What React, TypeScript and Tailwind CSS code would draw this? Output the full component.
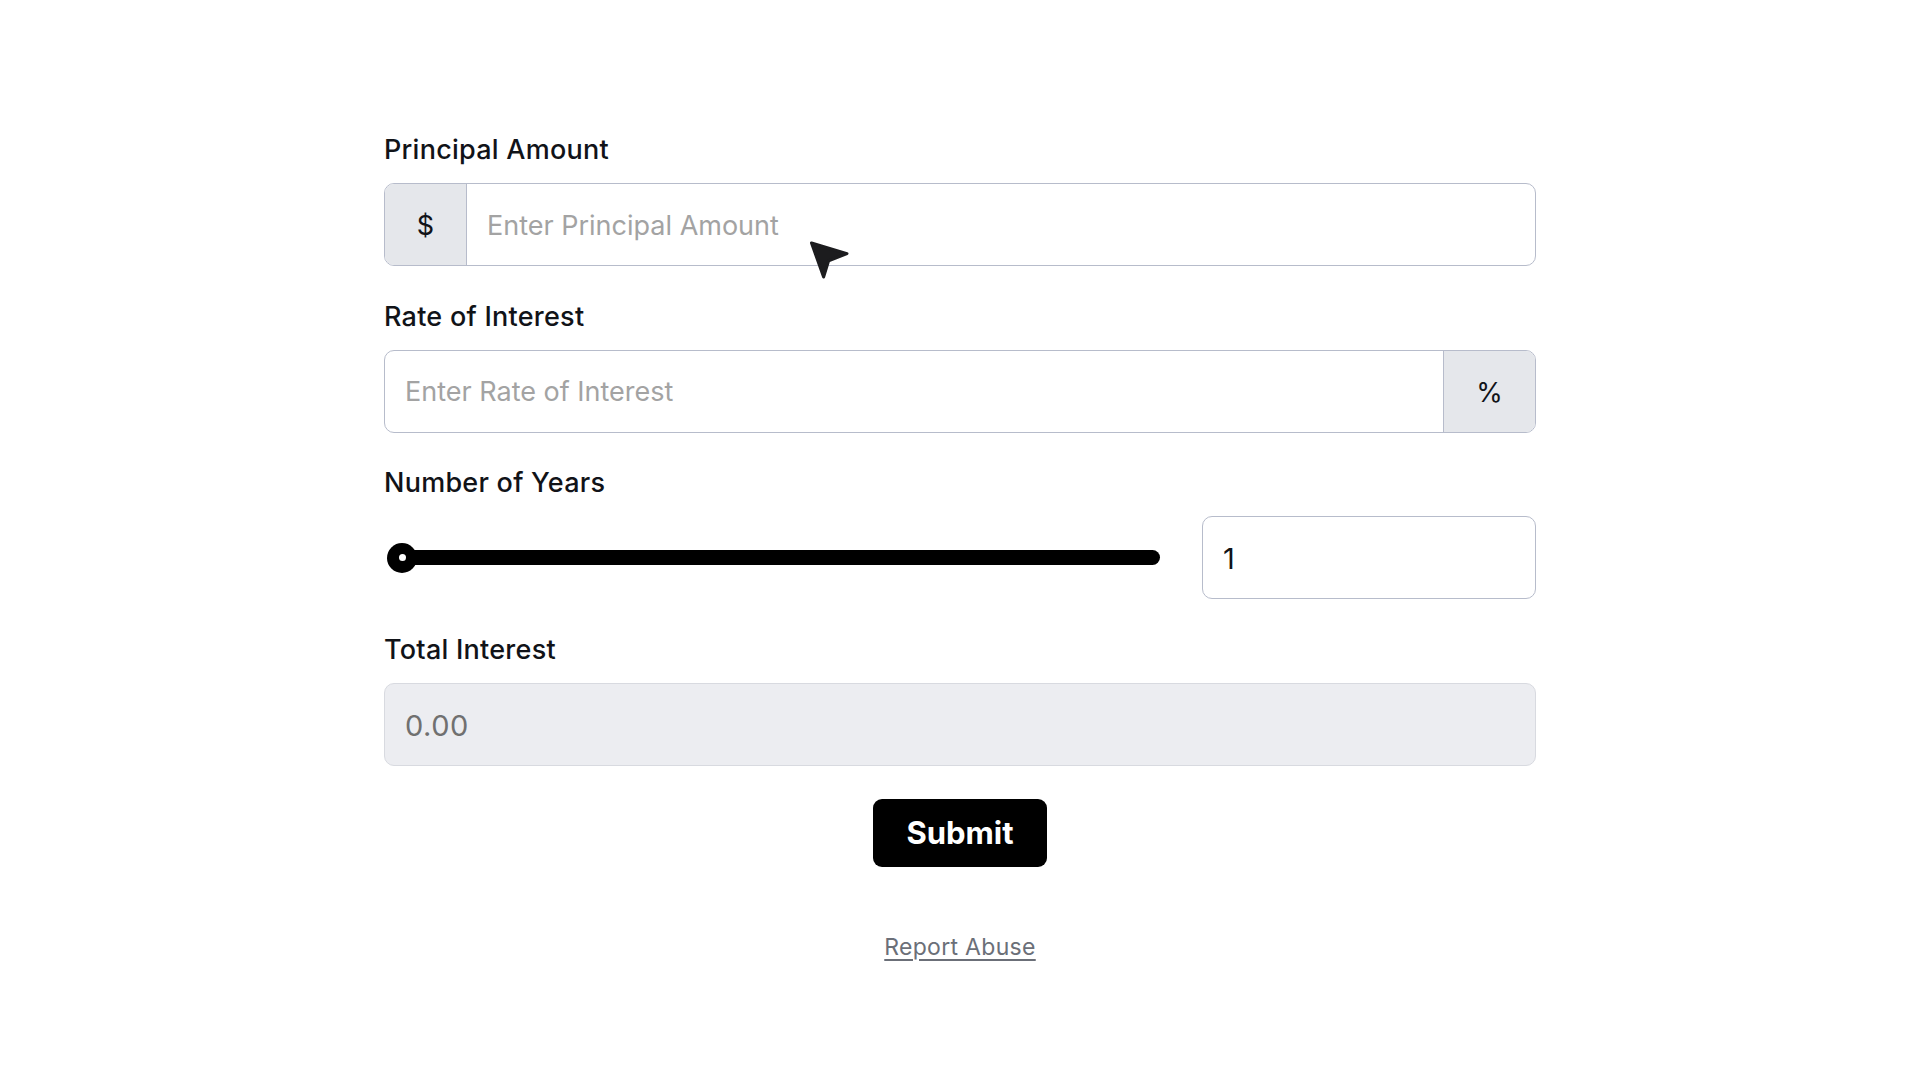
import React, { useState } from "react";

// Simple interest calculator form

const labelCls =
  "block text-[27px] font-medium leading-[39px] tracking-[0.25px] text-[#111318] mb-[14px]";
const boxCls =
  "h-[83px] rounded-[10px] border-[1.5px] border-[#b7bccb] bg-white flex items-stretch overflow-hidden";
const inputCls =
  "flex-1 min-w-0 bg-transparent px-[20px] pt-[3px] text-[27px] text-[#111318] outline-none placeholder:text-[#a3a3a3]";
const addonCls =
  "shrink-0 bg-[#e5e7eb] border-[#b7bccb] flex items-center justify-center pt-[4px] text-[27px] text-[#111318]";

function CursorArrow() {
  return (
    <svg
      className="absolute left-[806px] top-[238px] pointer-events-none"
      width="46"
      height="44"
      viewBox="0 0 46 44"
    >
      <path
        d="M5.5 5 L41 15.6 L22.6 22.8 L17.6 39 Z"
        fill="#1c1c1e"
        stroke="#1c1c1e"
        strokeWidth="3"
        strokeLinejoin="round"
      />
    </svg>
  );
}

function YearsSlider({ value }: { value: number }) {
  const pct = ((value - 1) / 29) * 100;
  return (
    <div className="relative flex-1 h-[30px] flex items-center">
      <div className="ml-[4px] h-[15px] w-full rounded-full bg-black" />
      <div
        className="absolute top-0 w-[30px] h-[30px] rounded-full bg-black flex items-center justify-center"
        style={{ left: `calc(${pct}% * 0.96 + 3px)` }}
      >
        <div className="w-[7px] h-[7px] rounded-full bg-white" />
      </div>
    </div>
  );
}

export default function App() {
  const [years, setYears] = useState(1);

  return (
    <div
      className="relative min-h-screen bg-white"
      style={{ fontFamily: "Inter, 'Noto Sans', sans-serif" }}
    >
      <div className="w-[1152px] mx-auto pt-[130px] flex flex-col">
        <div className="flex flex-col gap-[30.5px]">
          <div>
            <label className={labelCls}>Principal Amount</label>
            <div className={boxCls}>
              <span className={`${addonCls} w-[82px] border-r-[1.5px]`}>$</span>
              <input className={inputCls} placeholder="Enter Principal Amount" />
            </div>
          </div>

          <div>
            <label className={labelCls}>Rate of Interest</label>
            <div className={boxCls}>
              <input className={inputCls} placeholder="Enter Rate of Interest" />
              <span className={`${addonCls} w-[92px] border-l-[1.5px]`}>%</span>
            </div>
          </div>

          <div>
            <label className={labelCls}>Number of Years</label>
            <div className="flex items-center gap-[42px]">
              <YearsSlider value={years} />
              <div className={`${boxCls} w-[334px] shrink-0`}>
                <input
                  className={`${inputCls} text-[29px]`}
                  value={years}
                  onChange={(e) => setYears(Number(e.target.value) || 1)}
                />
              </div>
            </div>
          </div>

          <div>
            <label className={labelCls}>Total Interest</label>
            <div className="h-[83px] rounded-[10px] border-[1.5px] border-[#d8dae0] bg-[#ecedf1] flex items-center px-[20px] pt-[3px] text-[29px] tracking-[0.5px] text-[#707070]">
              0.00
            </div>
          </div>
        </div>

        <div className="mt-[33px] flex justify-center">
          <button
            type="button"
            className="h-[68px] px-[33px] rounded-[9px] bg-black text-white text-[31px] font-bold leading-none"
          >
            Submit
          </button>
        </div>

        <div className="mt-[65px] flex justify-center">
          <a
            href="#"
            className="text-[23px] leading-[30px] tracking-[0.3px] text-[#6b6f78] underline underline-offset-[4px] decoration-[1.5px]"
          >
            Report Abuse
          </a>
        </div>
      </div>

      <CursorArrow />
    </div>
  );
}
